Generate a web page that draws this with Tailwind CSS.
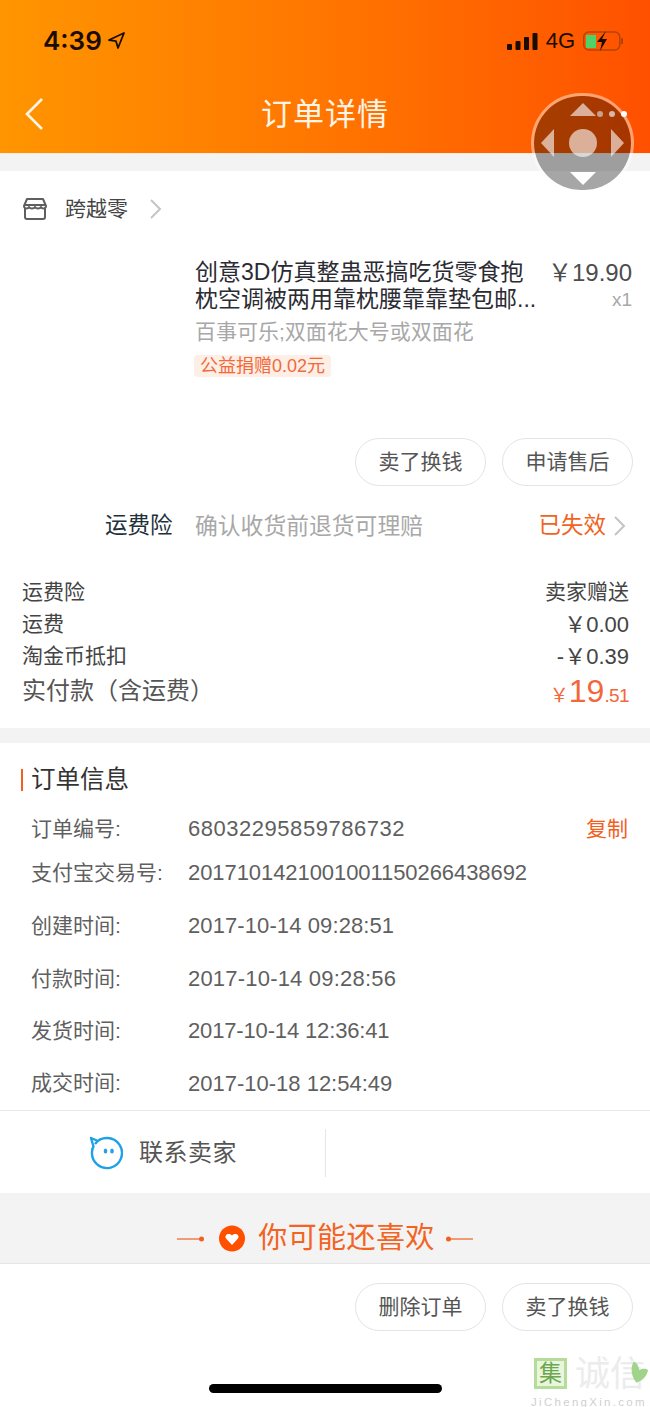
<!DOCTYPE html>
<html lang="zh">
<head>
<meta charset="utf-8">
<script src="https://cdn.jsdelivr.net/npm/@tailwindcss/browser@4"></script>
</head>
<body class="bg-white">
<div class="relative w-[650px] h-[1407px] overflow-hidden bg-white font-['Liberation_Sans','Noto_Sans_CJK_SC',sans-serif] text-[#3d3d3d]">

  <!-- Header -->
  <header class="h-[153px] bg-gradient-to-r from-[#ff9500] to-[#ff5000] px-[22px] flex flex-col">
    <div class="h-[81px] flex items-center justify-between">
      <div class="flex items-center gap-[6px] pl-[21px] text-[#1a0d00]">
        <span class="font-['Inter'] text-[26px] leading-none font-semibold">4:39</span>
        <svg width="17" height="17" viewBox="0 0 17 17"><path d="M16 1 1 8l7 1.200L10 16z" fill="none" stroke="#1a0d00" stroke-width="1.800" stroke-linejoin="round"/></svg>
      </div>
      <div class="flex items-center gap-[8px] mr-[3px]">
        <svg width="31" height="18" viewBox="0 0 31 18" fill="#1a0d00"><rect x="0" y="12" width="5" height="6" rx="1"/><rect x="8.500" y="9" width="5" height="9" rx="1"/><rect x="17" y="5" width="5" height="13" rx="1"/><rect x="25.500" y="1" width="5" height="17" rx="1"/></svg>
        <span class="text-[22px] leading-none text-[#1a0d00]">4G</span>
        <svg width="42" height="20" viewBox="0 0 42 20"><rect x="0.750" y="1" width="36" height="18" rx="5" fill="none" stroke="#b34405" stroke-width="1.500"/><rect x="3" y="4" width="10" height="13" fill="#4fd16a"/><path d="M39 7v6" stroke="#b34405" stroke-width="2"/><path d="M23 0 14 11h5l-2 9 7-12h-5z" fill="#1a0d00"/></svg>
      </div>
    </div>
    <div class="relative h-[62px] flex items-center justify-center pt-[4px]">
      <svg class="absolute left-[2px] top-[16px]" width="20" height="34" viewBox="0 0 20 34"><path d="M18 2 3 17l15 15" fill="none" stroke="#fff5e8" stroke-width="2.600"/></svg>
      <h1 class="text-[31px] leading-none text-[#fff4e6] tracking-[1px]">订单详情</h1>
    </div>
  </header>
  <div class="h-[18px] bg-[#f3f3f3] border-t border-[#fbe9dc]"></div>

  <!-- Order card -->
  <section class="h-[557px] pl-[22px] pr-[17px] flex flex-col">
    <div class="h-[75px] flex items-center">
      <svg width="26" height="24" viewBox="0 0 26 24" fill="none" stroke="#5f5f5f" stroke-width="2"><path d="M5 2h16l3 7c0 3-4 3-5 1-1 2-5 2-6 0-1 2-5 2-6 0-1 2-5 2-5-1z" stroke-linejoin="round"/><path d="M3 11v9a2 2 0 0 0 2 2h16a2 2 0 0 0 2-2v-9M3 8h20"/></svg>
      <span class="ml-[17px] text-[21px] leading-none text-[#444]">跨越零</span>
      <svg class="ml-[21px]" width="13" height="20" viewBox="0 0 13 20"><path d="m2 1 9 9-9 9" fill="none" stroke="#c4c4c4" stroke-width="2"/></svg>
    </div>

    <div class="h-[192px] pl-[173px] flex items-start justify-between">
      <div class="w-[345px]">
        <p class="text-[23px] leading-[27px] text-[#2b2b33] mt-[13px] whitespace-nowrap">创意3D仿真整蛊恶搞吃货零食抱</p>
        <p class="text-[23px] leading-[27px] text-[#2b2b33] whitespace-nowrap">枕空调被两用靠枕腰靠靠垫包邮...</p>
        <p class="text-[21px] leading-[26px] text-[#a8a8a8] mt-[6px] whitespace-nowrap">百事可乐;双面花大号或双面花</p>
        <span class="inline-block mt-[10px] -ml-[1px] px-[6px] h-[22px] rounded-[4px] bg-[#fdeee6] text-[18px] leading-[22px] text-[#f2693a] whitespace-nowrap">公益捐赠0.02元</span>
      </div>
      <div class="text-right mt-[13px] mr-[1px]">
        <p class="text-[24px] leading-[27px] text-[#4d4d4d] whitespace-nowrap">￥19.90</p>
        <p class="text-[19px] leading-[27px] text-[#a8a8a8]">x1</p>
      </div>
    </div>

    <div class="flex justify-end gap-[16px] h-[48px]">
      <button class="w-[131px] h-[48px] rounded-full border border-[#e4e4e4] text-[21px] text-[#555]">卖了换钱</button>
      <button class="w-[131px] h-[48px] rounded-full border border-[#e4e4e4] text-[21px] text-[#555]">申请售后</button>
    </div>

    <div class="h-[80px] flex items-center pl-[83px]">
      <span class="w-[90px] text-[22.500px] leading-none text-[#22303a]">运费险</span>
      <span class="text-[22.800px] leading-none text-[#a8a8a8] whitespace-nowrap">确认收货前退货可理赔</span>
      <span class="ml-auto text-[22.500px] leading-none text-[#f0641e]">已失效</span>
      <svg class="ml-[7px] mr-[7px]" width="13" height="20" viewBox="0 0 13 20"><path d="m2 1 9 9-9 9" fill="none" stroke="#c4c4c4" stroke-width="2"/></svg>
    </div>

    <div class="pr-[4px] text-[#444] mt-[10px]">
      <div class="h-[32px] flex items-center justify-between text-[21px]"><span>运费险</span><span>卖家赠送</span></div>
      <div class="h-[32px] flex items-center justify-between text-[21px]"><span>运费</span><span class="text-[22px]">￥0.00</span></div>
      <div class="h-[32px] flex items-center justify-between text-[21px]"><span>淘金币抵扣</span><span class="text-[22px]">-￥0.39</span></div>
      <div class="h-[38px] flex items-center justify-between">
        <span class="text-[24px] text-[#555] whitespace-nowrap">实付款（含运费）</span>
        <span class="text-[#f2683a] whitespace-nowrap leading-none"><span class="text-[19px]">￥</span><span class="text-[32px]">19</span><span class="text-[19px] tracking-[-0.6px]">.51</span></span>
      </div>
    </div>
  </section>
  <div class="h-[15px] bg-[#f3f3f3]"></div>

  <!-- Order info -->
  <section class="h-[367px] pl-[21px] pr-[17px] flex flex-col">
    <div class="h-[68px] shrink-0 flex items-center pt-[6px]">
      <span class="w-[2px] h-[22px] bg-[#f2601e]"></span>
      <h2 class="ml-[8px] text-[24.500px] leading-none text-[#333]">订单信息</h2>
    </div>
    <dl class="pl-[10px] text-[21px] text-[#5f5f5f]">
      <div class="h-[35px] flex items-center"><dt class="w-[157px]">订单编号:</dt><dd class="text-[22px] tracking-[0.53px]">68032295859786732</dd><span class="ml-auto mr-[5px] text-[#f2601e]">复制</span></div>
      <div class="h-[53px] flex items-center"><dt class="w-[157px] whitespace-nowrap">支付宝交易号:</dt><dd class="text-[22px] tracking-[-0.07px]">2017101421001001150266438692</dd></div>
      <div class="h-[53px] flex items-center"><dt class="w-[157px]">创建时间:</dt><dd class="text-[22px] tracking-[0.1px]">2017-10-14 09:28:51</dd></div>
      <div class="h-[53px] flex items-center"><dt class="w-[157px]">付款时间:</dt><dd class="text-[22px] tracking-[0.2px]">2017-10-14 09:28:56</dd></div>
      <div class="h-[51px] flex items-center"><dt class="w-[157px]">发货时间:</dt><dd class="text-[22px] tracking-[-0.15px]">2017-10-14 12:36:41</dd></div>
      <div class="h-[54px] flex items-center"><dt class="w-[157px]">成交时间:</dt><dd class="text-[22px]">2017-10-18 12:54:49</dd></div>
    </dl>
  </section>

  <!-- Contact -->
  <section class="h-[83px] border-t border-[#eaeaea] flex">
    <div class="w-[326px] h-[48px] mt-[18px] border-r border-[#e6e6e6] flex items-center pl-[89px]">
      <svg width="34" height="34" viewBox="0 0 34 34" fill="none"><path d="M6 8A15 15 0 1 1 3 16c0-2 .5-4 1.500-5.500L2 2l7 3" stroke="#1ea1e6" stroke-width="2.400" stroke-linejoin="round"/><ellipse cx="16.500" cy="15" rx="1.800" ry="2.600" fill="#1ea1e6"/><ellipse cx="23" cy="15" rx="1.800" ry="2.600" fill="#1ea1e6"/></svg>
      <span class="ml-[16px] text-[24px] leading-none text-[#555] tracking-[0.5px]">联系卖家</span>
    </div>
  </section>

  <!-- Recommend -->
  <section class="h-[71px] bg-[#f3f3f3] border-b border-[#e6e6e6] flex items-center justify-center pt-[21px]">
    <svg width="28" height="8" viewBox="0 0 28 8"><path d="M0 4h24" stroke="#f2601e" stroke-width="1.200"/><circle cx="24.500" cy="4" r="2.500" fill="#f2601e"/></svg>
    <svg class="ml-[14px]" width="26" height="27" viewBox="0 0 26 27"><circle cx="13" cy="13.500" r="13" fill="#ff5000"/><path d="M13 20 7 13.500c-2-3 2-6.500 6-3 4-3.500 8 0 6 3z" fill="#fff"/></svg>
    <span class="ml-[13px] text-[29px] leading-none text-[#f2641f] tracking-[0.4px]">你可能还喜欢</span>
    <svg class="ml-[10px]" width="28" height="8" viewBox="0 0 28 8"><path d="M4 4h24" stroke="#f2601e" stroke-width="1.200"/><circle cx="3.500" cy="4" r="2.500" fill="#f2601e"/></svg>
  </section>

  <!-- Bottom actions -->
  <section class="px-[17px] pt-[19px] flex justify-end gap-[16px]">
    <button class="w-[131px] h-[48px] rounded-full border border-[#e4e4e4] text-[21px] text-[#555]">删除订单</button>
    <button class="w-[131px] h-[48px] rounded-full border border-[#e4e4e4] text-[21px] text-[#555]">卖了换钱</button>
  </section>

  <!-- Home indicator -->
  <div class="absolute left-[209px] top-[1384px] w-[233px] h-[9px] rounded-full bg-black"></div>

  <!-- Floating assistive control -->
  <div class="absolute left-[531px] top-[93px] w-[103px] h-[100px] rounded-full bg-black/35 bg-clip-padding border-[3px] border-white/45">
    <svg class="absolute left-0 top-0" width="97" height="94" viewBox="0 0 97 94" fill="#ffffff" fill-opacity="0.6">
      <path d="M49 7 36 20h26z"/><path d="M49 89 36 76h26z" fill-opacity="1"/>
      <path d="M7 47 20 33v28z"/><path d="M90 47 77 33v28z"/>
      <circle cx="49" cy="47" r="14"/>
    </svg>
  </div>
  <div class="absolute left-[597px] top-[111px] flex gap-[6px]">
    <span class="w-[6px] h-[6px] rounded-full bg-[#c9a08e]"></span>
    <span class="w-[6px] h-[6px] rounded-full bg-[#d9b6a5]"></span>
    <span class="w-[6px] h-[6px] rounded-full bg-white"></span>
  </div>

  <!-- Watermark -->
  <div class="absolute left-[534px] top-[1358px] w-[116px]">
    <div class="flex items-center h-[31px]">
      <span class="w-[33px] h-[31px] border-[3px] border-[#b5dc9a] bg-[#eaf6dc] text-[23px] leading-[25px] text-center text-[#6aa84f]">集</span>
      <span class="ml-[8px] text-[35px] leading-none text-[#ececec] whitespace-nowrap">诚信</span>
    </div>
    <svg class="absolute left-[92px] top-[2px]" width="23" height="28" viewBox="0 0 24 28"><path d="M8 1c4 2 5 5 6 9 3-2 7-2 9 0-1 6-6 11-12 13C6 18 4 8 8 1z" fill="#9fd48a"/></svg>
    <p class="-ml-[3px] text-[11.500px] leading-none mt-[8px] text-[#d0d0d0] tracking-[2.300px] whitespace-nowrap">JiChengXin.com</p>
  </div>
</div>
</body>
</html>
